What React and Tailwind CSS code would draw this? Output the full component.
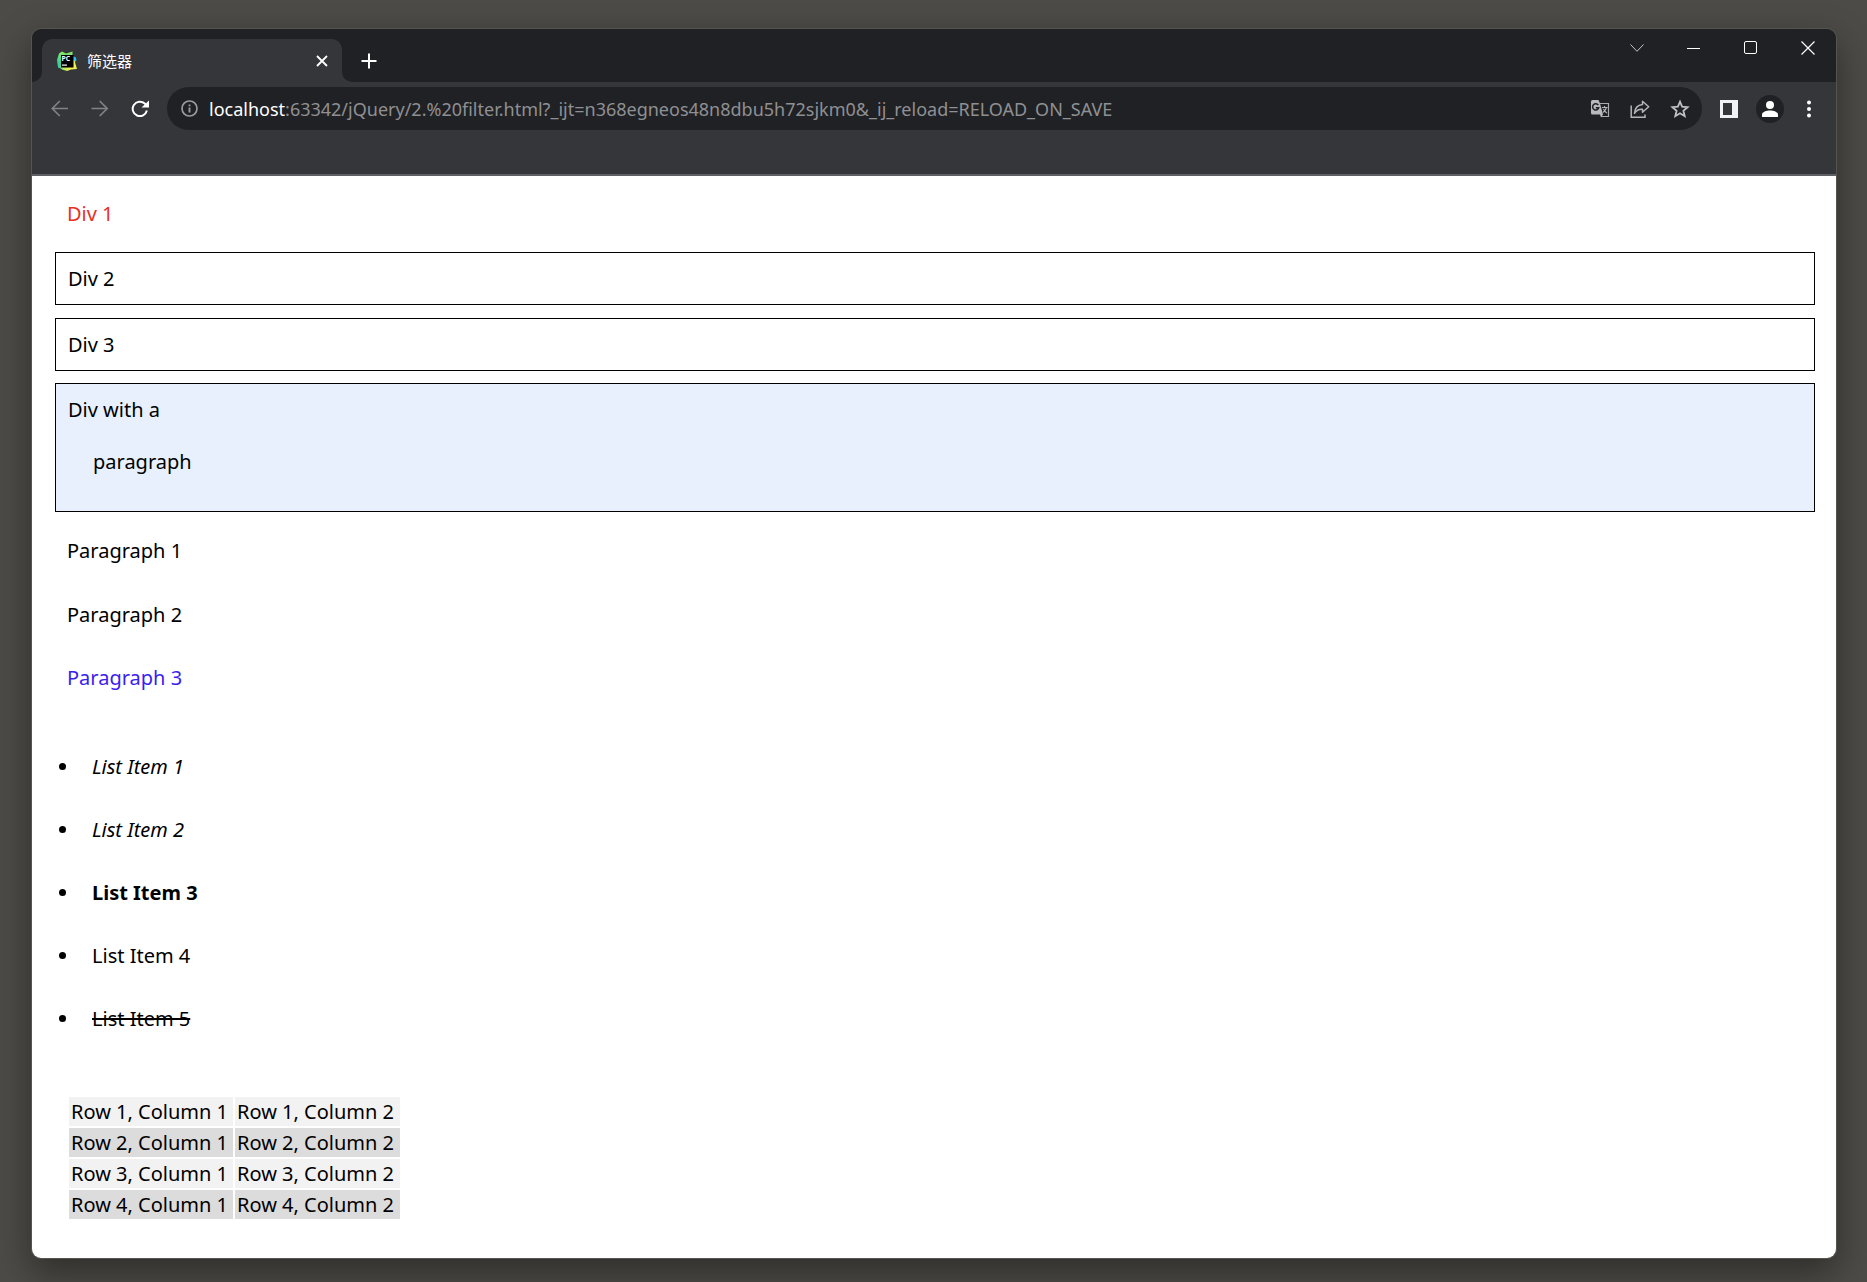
import React from "react";

function IconButton({ label, className = "", children }) {
  return (
    <button type="button" aria-label={label} className={`flex shrink-0 items-center justify-center ${className}`}>
      {children}
    </button>
  );
}

function PyCharmLogo() {
  return (
    <svg width="20" height="20" viewBox="0 0 20 20" aria-hidden="true">
      <defs>
        <linearGradient id="pcGreen" x1="0" y1="0" x2="0" y2="1">
          <stop offset="0" stopColor="#8fea5c" />
          <stop offset="0.5" stopColor="#3fd39a" />
          <stop offset="1" stopColor="#35c9a5" />
        </linearGradient>
        <linearGradient id="pcYellow" x1="0" y1="0" x2="1" y2="0">
          <stop offset="0" stopColor="#8be36a" />
          <stop offset="0.6" stopColor="#f4f14e" />
          <stop offset="1" stopColor="#e9ee50" />
        </linearGradient>
      </defs>
      <path d="M2 2.500 5 .5 9 2.500 14 1 15.500 .5 15.500 5 6 14 7 19 1 16.500 0 9Z" fill="url(#pcGreen)" />
      <path d="M16 5.500 18.500 6 19.500 9 17.500 12 14 10Z" fill="#2bc4f0" />
      <path d="M3 15 16 9 17.500 9.500 20 18 14 18.500 10 20 5 18.500Z" fill="url(#pcYellow)" />
      <rect x="4" y="4" width="12.500" height="12.500" fill="#000" />
      <text x="4.600" y="10" fontSize="6.800" fontWeight="700" fill="#fff" fontFamily="Open Sans, sans-serif">PC</text>
      <rect x="5" y="13.500" width="5" height="1.200" fill="#fff" />
    </svg>
  );
}

function TabStrip() {
  return (
    <div className="flex h-[53px] items-start bg-[#202124] pl-[10px]">
      <div className="relative mt-[10px] flex h-[43px] w-[300px] items-center rounded-t-[10px] bg-[#35363a] pr-3 pl-[15px]">
        <svg className="absolute bottom-0 -left-[10px]" width="10" height="10" aria-hidden="true">
          <path d="M10 0A10 10 0 0 1 0 10H10Z" fill="#35363a" />
        </svg>
        <svg className="absolute -right-[10px] bottom-0" width="10" height="10" aria-hidden="true">
          <path d="M0 0A10 10 0 0 0 10 10H0Z" fill="#35363a" />
        </svg>
        <PyCharmLogo />
        <span className="ml-[10px] flex-1 text-[15px] leading-5 text-white">筛选器</span>
        <IconButton label="关闭标签页" className="size-4 text-white">
          <svg width="12" height="12" viewBox="0 0 12 12" stroke="currentColor" strokeWidth="1.800" aria-hidden="true">
            <path d="M1 1 11 11M11 1 1 11" />
          </svg>
        </IconButton>
      </div>
      <IconButton label="打开新的标签页" className="mt-[22px] ml-[17px] size-5 text-white">
        <svg width="16" height="16" viewBox="0 0 16 16" stroke="currentColor" strokeWidth="2" aria-hidden="true">
          <path d="M8 .5V15.500M.5 8H15.500" />
        </svg>
      </IconButton>
      <div className="ml-auto flex h-[38px] text-white">
        <IconButton label="搜索标签页" className="w-[57px]">
          <svg width="14" height="8" viewBox="0 0 14 8" fill="none" stroke="#c4c5c7" aria-hidden="true">
            <path d="M.5 .5 7 7.300 13.500 .5" />
          </svg>
        </IconButton>
        <IconButton label="最小化" className="w-[57px]">
          <svg width="13" height="1" aria-hidden="true"><rect width="13" height="1" fill="#fff" /></svg>
        </IconButton>
        <IconButton label="最大化" className="w-[57px]">
          <svg width="14" height="14" viewBox="0 0 14 14" fill="none" stroke="#fff" aria-hidden="true">
            <rect x=".5" y=".5" width="12" height="12" rx="1.500" />
          </svg>
        </IconButton>
        <IconButton label="关闭" className="w-[57px]">
          <svg width="14" height="14" viewBox="0 0 14 14" stroke="#fff" strokeWidth="1.200" aria-hidden="true">
            <path d="M.5 .5 13.500 13.500M13.500 .5 .5 13.500" />
          </svg>
        </IconButton>
      </div>
    </div>
  );
}

function Toolbar() {
  return (
    <div className="h-[94px] border-b-2 border-[#5f6065] bg-[#35363a] pt-[5px]">
      <div className="flex h-[43px] items-center px-[18px]">
        <IconButton label="后退" className="size-5 text-[#818286]">
          <svg width="18" height="18" viewBox="0 0 18 18" fill="none" stroke="currentColor" strokeWidth="1.700" aria-hidden="true">
            <path d="M17 8.500H1.500M8.800 1 1.300 8.500 8.800 16" />
          </svg>
        </IconButton>
        <IconButton label="前进" className="ml-5 size-5 text-[#818286]">
          <svg width="18" height="18" viewBox="0 0 18 18" fill="none" stroke="currentColor" strokeWidth="1.700" aria-hidden="true">
            <path d="M.5 8.500H16M8.700 1 16.200 8.500 8.700 16" />
          </svg>
        </IconButton>
        <IconButton label="重新加载" className="ml-5 size-5 text-white">
          <svg width="18" height="18" viewBox="0 0 18 18" fill="none" aria-hidden="true">
            <path d="M15.900 10.600A7.200 7.200 0 1 1 13.800 3.600L16 6" stroke="currentColor" strokeWidth="2" />
            <path d="M18 .5V7.500H10.500Z" fill="currentColor" />
          </svg>
        </IconButton>
        <div className="ml-[17px] flex h-[43px] min-w-0 flex-1 items-center rounded-full bg-[#202124] pr-3 pl-[14px]">
          <IconButton label="查看网站信息" className="size-[17px] text-[#9a9b9e]">
            <svg width="17" height="17" viewBox="0 0 17 17" fill="none" stroke="currentColor" aria-hidden="true">
              <circle cx="8.500" cy="8.500" r="7.500" strokeWidth="1.700" />
              <path d="M8.500 7.500V12.500M8.500 4.500V6.300" strokeWidth="1.900" />
            </svg>
          </IconButton>
          <label htmlFor="address" className="ml-[11px] text-[18px] leading-6 text-white">localhost</label>
          <input
            id="address"
            type="text"
            defaultValue=":63342/jQuery/2.%20filter.html?_ijt=n368egneos48n8dbu5h72sjkm0&_ij_reload=RELOAD_ON_SAVE"
            className="h-6 min-w-0 flex-1 bg-transparent text-[18px] leading-6 text-[#8f9093] outline-none"
          />
          <IconButton label="翻译此网页" className="size-5">
            <svg width="19" height="18" viewBox="0 0 19 18" aria-hidden="true">
              <path d="M9 3.500H17.500V16.500H10" fill="none" stroke="#a9aaac" strokeWidth="1.200" />
              <path d="M1.500 0H7.500L9 3.500 12 14.500 10 17.500 9 14.500H1.500Q0 14.500 0 13V1.500Q0 0 1.500 0Z" fill="#b8b9bb" />
              <path d="M7.300 5.200A3.100 3.100 0 1 0 7.700 7.700H4.800" fill="none" stroke="#202124" strokeWidth="1.500" />
              <path d="M11 7.500H16.500M13.500 6V7.500M15.500 7.500Q14.500 10.500 12 12.500M12.500 9Q13.500 11.500 16 13" fill="none" stroke="#b4b5b7" strokeWidth="1.100" />
            </svg>
          </IconButton>
          <IconButton label="分享此页" className="ml-5 size-5">
            <svg width="20" height="18" viewBox="0 0 20 18" fill="none" stroke="#b4b5b7" strokeWidth="1.500" aria-hidden="true">
              <path d="M1.200 5.500V17.200H15V14.500" />
              <path d="M12.500 1.300 18.700 6.800 12.500 12.300V9.300Q7.500 8.800 4.500 13.300 5 5.300 12.500 4.500Z" strokeLinejoin="round" />
            </svg>
          </IconButton>
          <IconButton label="为此标签页添加书签" className="ml-5 size-5">
            <svg width="20" height="20" viewBox="0 0 20 20" fill="none" stroke="#c0c1c3" strokeWidth="1.800" aria-hidden="true">
              <path d="M10 2.700 12.100 7.700 17.600 8.200 13.400 11.800 14.700 17.200 10 14.300 5.300 17.200 6.600 11.800 2.400 8.200 7.900 7.700Z" />
            </svg>
          </IconButton>
        </div>
        <IconButton label="侧边栏" className="ml-[18px] size-[18px]">
          <svg width="18" height="18" viewBox="0 0 18 18" aria-hidden="true">
            <path fillRule="evenodd" d="M0 0H18V18H0ZM3 3V15H12V3Z" fill="#f1f2f3" />
          </svg>
        </IconButton>
        <IconButton label="用户" className="ml-[18px] size-7 rounded-full bg-[#202124]">
          <svg width="16" height="16" viewBox="0 0 16 16" fill="#fff" aria-hidden="true">
            <circle cx="8" cy="4" r="4" />
            <path d="M0 16V13.500C0 11 4.500 9.500 8 9.500S16 11 16 13.500V16Z" />
          </svg>
        </IconButton>
        <IconButton label="自定义及控制" className="ml-4 h-5 w-[18px]">
          <svg width="4" height="18" viewBox="0 0 4 18" fill="#fff" aria-hidden="true">
            <circle cx="2" cy="2.500" r="2" />
            <circle cx="2" cy="9" r="2" />
            <circle cx="2" cy="15.500" r="2" />
          </svg>
        </IconButton>
      </div>
    </div>
  );
}

const listItems = [
  { text: "List Item 1", style: "italic" },
  { text: "List Item 2", style: "italic" },
  { text: "List Item 3", style: "font-bold" },
  { text: "List Item 4", style: "" },
  { text: "List Item 5", style: "line-through decoration-2" },
];

const rows = [1, 2, 3, 4];

function Page() {
  return (
    <main className="flex-1 bg-white pt-3 pr-[21px] pb-8 pl-[23px] text-[20px] leading-[27px] text-black">
      <div className="p-3 text-[#e8301f]">Div 1</div>
      <div className="mt-[13px] border border-black p-3">Div 2</div>
      <div className="mt-[13px] border border-black p-3">Div 3</div>
      <div className="mt-3 border border-black bg-[#e8f0fe] p-3">
        Div with a
        <p className="m-3 p-[13px] pb-3">paragraph</p>
      </div>
      <p className="mt-[13px] p-3">Paragraph 1</p>
      <p className="mt-[13px] p-3">Paragraph 2</p>
      <p className="mt-3 p-3 text-[#3a1ef0]">Paragraph 3</p>
      <ul className="mt-[38px] flex flex-col gap-3 pl-1">
        {listItems.map((item) => (
          <li key={item.text} className="flex items-center py-3">
            <span className="mr-[26px] size-[7px] rounded-full bg-black" />
            <span className={item.style}>{item.text}</span>
          </li>
        ))}
      </ul>
      <table className="mt-[51px] ml-3 border-separate border-spacing-[2px]">
        <tbody>
          {rows.map((n) => (
            <tr key={n} className="odd:bg-[#f2f2f2] even:bg-[#dcdcdc]">
              <td className="min-w-[164px] px-[2px] py-px">Row {n}, Column 1</td>
              <td className="min-w-[165px] px-[2px] py-px">Row {n}, Column 2</td>
            </tr>
          ))}
        </tbody>
      </table>
    </main>
  );
}

export default function App() {
  return (
    <div className="flex min-h-screen flex-col bg-[#4c4b47] pt-7 pr-[30px] pb-[23px] pl-[31px] font-['Noto_Sans','Noto_Sans_CJK_SC',sans-serif]">
      <div className="flex flex-1 flex-col overflow-hidden rounded-[10px] border border-[#55544f] shadow-[0_14px_36px_rgba(0,0,0,0.4)]">
        <TabStrip />
        <Toolbar />
        <Page />
      </div>
    </div>
  );
}
